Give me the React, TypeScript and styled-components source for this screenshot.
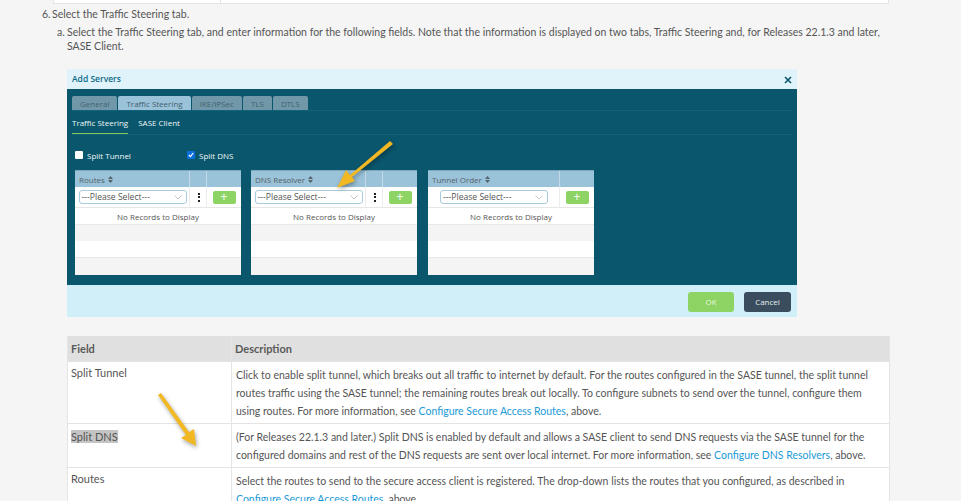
import React from "react";
import styled, { createGlobalStyle } from "styled-components";

const Global = createGlobalStyle`
  html, body { margin: 0; padding: 0; background: #f5f5f5; }
  body { width: 961px; height: 501px; overflow: hidden; font-family: "Lato", "Liberation Sans", sans-serif; }
  * { box-sizing: border-box; }
`;

const Page = styled.div`
  position: relative;
  width: 961px;
  height: 501px;
  overflow: hidden;
  color: #555;
`;

const TopTable = styled.div`
  display: grid;
  grid-template-columns: 166px 1fr;
  margin: 0 72px 0 53px;
  height: 4px;
  gap: 1px;
  background: #e4e4e4;
  padding: 0 1px 1px;
`;
const TopCell = styled.div`background: #fff;`;

const Step = styled.div<{ $indent: number }>`
  display: flex;
  margin-left: ${(p) => p.$indent}px;
  margin-right: 72px;
  font-size: 10.5px;
  line-height: 14px;
`;
const StepMark = styled.span<{ $w: number }>`
  flex: none;
  width: ${(p) => p.$w}px;
`;
const StepOne = styled(Step)`margin-top: 3px;`;
const StepTwo = styled(Step)`margin-top: 4px;`;

const Dialog = styled.div`
  width: 730px;
  margin: 16px 0 0 67px;
  font-family: "Open Sans", "Liberation Sans", sans-serif;
`;
const TitleBar = styled.div`
  display: flex;
  justify-content: space-between;
  align-items: center;
  height: 20px;
  padding: 0 5px 2px;
  background: #e0f3fb;
  color: #0d6a84;
  font-size: 8.5px;
  font-weight: 600;
`;
const Close = styled.span`
  display: flex;
  color: #0a566c;
  margin-top: 4px;
`;
const Body = styled.div`
  height: 196px;
  background: #0a566c;
  padding: 7px 6px 0 5px;
`;
const TabRow = styled.div`
  display: flex;
  gap: 1px;
  height: 15px;
  border-bottom: 1px solid #13637a;
`;
const Tab = styled.div<{ $active?: boolean }>`
  height: 14px;
  padding: 0 8px;
  display: flex;
  align-items: center;
  font-size: 8px;
  color: #44606e;
  background: ${(p) => (p.$active ? "#9ac2d8" : "#7198a9")};
  border-radius: 2px 2px 0 0;
`;
const SubTabs = styled.div`
  display: flex;
  gap: 10px;
  height: 24px;
  border-bottom: 1px solid #13637a;
`;
const SubTab = styled.div<{ $active?: boolean }>`
  height: 23px;
  display: flex;
  align-items: center;
  font-size: 8px;
  color: #eef6f8;
  border-bottom: 1px solid ${(p) => (p.$active ? "#7fc95a" : "transparent")};
`;
const Checks = styled.div`
  display: flex;
  margin: 14px 0 0 3px;
  height: 12px;
  align-items: center;
`;
const CheckItem = styled.label`
  display: flex;
  align-items: center;
  gap: 4px;
  width: 112px;
  font-size: 8px;
  color: #eef6f8;
`;
const Box = styled.span<{ $on?: boolean }>`
  width: 8px;
  height: 8px;
  display: flex;
  align-items: center;
  justify-content: center;
  border-radius: 1px;
  background: ${(p) => (p.$on ? "#0a6fdc" : "#fff")};
`;
const Tables = styled.div`
  display: flex;
  gap: 10px;
  margin: 9px 0 0 3px;
`;
const Grid = styled.div<{ $shift: number }>`
  width: 166px;
  height: 105px;
  margin-left: ${(p) => p.$shift}px;
  background: #fff;
  border-top: 1px solid #7ea7bb;
  color: #555;
`;
const GridRow = styled.div<{ $cols: string }>`
  display: grid;
  grid-template-columns: ${(p) => p.$cols};
`;
const HeadCell = styled.div`
  height: 16px;
  padding-left: 4px;
  display: flex;
  align-items: center;
  gap: 3px;
  font-size: 8px;
  color: #55636b;
  background: #9ac2d8;
  border-right: 1px solid #c4dbe7;
  &:last-child { border-right: 0; }
`;
const ControlCell = styled.div`
  height: 21px;
  display: flex;
  align-items: center;
  justify-content: center;
  padding-left: 1px;
  border-right: 1px solid #ececec;
  border-bottom: 1px solid #e6e6e6;
  &:last-child { border-right: 0; padding-left: 0; }
`;
const Select = styled.div`
  width: 108px;
  height: 14px;
  display: flex;
  align-items: center;
  justify-content: space-between;
  padding: 0 4px 0 2px;
  border: 1px solid #a9cbdc;
  border-radius: 3px;
  font-size: 8.6px;
  color: #555;
`;
const Dots = styled.span`
  display: flex;
  flex-direction: column;
  gap: 1.5px;
`;
const Dot = styled.i`
  display: block;
  width: 2px;
  height: 2px;
  background: #222;
`;
const Plus = styled.div`
  width: 23px;
  height: 13px;
  display: flex;
  align-items: center;
  justify-content: center;
  background: #8ed465;
  color: #fff;
  border-radius: 2px;
  font-size: 12px;
  line-height: 1;
`;
const Empty = styled.div`
  height: 17px;
  display: flex;
  align-items: center;
  justify-content: center;
  font-size: 8px;
  border-bottom: 1px solid #e8e8e8;
`;
const Stripe = styled.div<{ $odd: boolean; $h: number }>`
  height: ${(p) => p.$h}px;
  background: ${(p) => (p.$odd ? "#f4f4f4" : "#fff")};
  border-bottom: ${(p) => (p.$odd ? "0" : "1px solid #e8e8e8")};
`;
const Footer = styled.div`
  height: 32px;
  background: #d0eff9;
  display: flex;
  justify-content: flex-end;
  align-items: flex-start;
  gap: 10px;
  padding: 7px 6px 0 0;
`;
const Btn = styled.div<{ $ok?: boolean }>`
  width: ${(p) => (p.$ok ? 46 : 47)}px;
  height: 20px;
  padding-bottom: 2px;
  display: flex;
  align-items: center;
  justify-content: center;
  border-radius: 3px;
  font-size: 8px;
  color: ${(p) => (p.$ok ? "#e4f6da" : "#e8edf0")};
  background: ${(p) => (p.$ok ? "#8ed465" : "#3a4d5e")};
`;

const Fields = styled.div`
  width: 823px;
  margin: 19px 0 0 67px;
  background: #e4e4e4;
  display: grid;
  grid-template-columns: 163px minmax(0, 1fr);
  gap: 1px;
  padding: 0 1px;
  font-size: 10.5px;
  line-height: 18px;
`;
const FH = styled.div`
  height: 25px;
  background: #e0e0e0;
  display: flex;
  align-items: center;
  padding-left: 3px;
  font-size: 11px;
  font-weight: 700;
  color: #5a5a5a;
`;
const FieldName = styled.div<{ $h: number; $top: number }>`
  background: #fff;
  height: ${(p) => p.$h}px;
  padding: ${(p) => p.$top}px 3px 0;
  font-size: 11px;
`;
const FieldDesc = styled.div<{ $h: number }>`
  background: #fff;
  height: ${(p) => p.$h}px;
  padding: 4px 4px 0;
  white-space: nowrap;
`;
const Mark = styled.span`background: #c4c4c4;`;
const DocLink = styled.a`color: #1a9ad6;`;

const Arrow = styled.svg<{ $x: number; $y: number }>`
  position: absolute;
  left: ${(p) => p.$x}px;
  top: ${(p) => p.$y}px;
  filter: drop-shadow(1px 2px 2px rgba(0,0,0,.35));
`;

const Caret = () => (
  <svg width="8" height="5" viewBox="0 0 8 5"><path d="M.5.5 4 4 7.5.5" fill="none" stroke="#bbb" strokeWidth=".8" /></svg>
);
const Sort = () => (
  <svg width="5" height="7" viewBox="0 0 5 7"><path d="M2.5 0 5 3H0zM0 4h5L2.5 7z" fill="#55636b" /></svg>
);

const TableBox = ({ title, dots, shift = 0 }: { title: string; dots: boolean; shift?: number }) => {
  const cols = dots ? "115px 17px 1fr" : "132px 1fr";
  return (
    <Grid $shift={shift}>
      <GridRow $cols={cols}>
        <HeadCell>{title} <Sort /></HeadCell>
        {dots && <HeadCell />}
        <HeadCell />
      </GridRow>
      <GridRow $cols={cols}>
        <ControlCell><Select>---Please Select---<Caret /></Select></ControlCell>
        {dots && <ControlCell><Dots><Dot /><Dot /><Dot /></Dots></ControlCell>}
        <ControlCell><Plus>+</Plus></ControlCell>
      </GridRow>
      <Empty>No Records to Display</Empty>
      <Stripe $odd $h={16} />
      <Stripe $odd={false} $h={17} />
      <Stripe $odd $h={17} />
    </Grid>
  );
};

export default function App() {
  return (
    <Page>
      <Global />
      <TopTable><TopCell /><TopCell /></TopTable>
      <StepOne $indent={42}>
        <StepMark $w={10}>6.</StepMark>
        <span>Select the Traffic Steering tab.</span>
      </StepOne>
      <StepTwo $indent={57}>
        <StepMark $w={10}>a.</StepMark>
        <span>Select the Traffic Steering tab, and enter information for the following fields. Note that the information is displayed on two tabs, Traffic Steering and, for Releases 22.1.3 and later, SASE Client.</span>
      </StepTwo>
      <Dialog>
        <TitleBar>
          Add Servers
          <Close>
            <svg width="8" height="8" viewBox="0 0 8 8"><path d="M1 1l6 6M7 1 1 7" stroke="currentColor" strokeWidth="1.6" /></svg>
          </Close>
        </TitleBar>
        <Body>
          <TabRow>
            <Tab>General</Tab>
            <Tab $active>Traffic Steering</Tab>
            <Tab>IKE/IPSec</Tab>
            <Tab>TLS</Tab>
            <Tab>DTLS</Tab>
          </TabRow>
          <SubTabs>
            <SubTab $active>Traffic Steering</SubTab>
            <SubTab>SASE Client</SubTab>
          </SubTabs>
          <Checks>
            <CheckItem><Box />Split Tunnel</CheckItem>
            <CheckItem>
              <Box $on>
                <svg width="6" height="6" viewBox="0 0 6 6"><path d="M.8 3 2.4 4.6 5.2 1" fill="none" stroke="#fff" strokeWidth="1.2" /></svg>
              </Box>
              Split DNS
            </CheckItem>
          </Checks>
          <Tables>
            <TableBox title="Routes" dots />
            <TableBox title="DNS Resolver" dots />
            <TableBox title="Tunnel Order" dots={false} shift={1} />
          </Tables>
        </Body>
        <Footer>
          <Btn $ok>OK</Btn>
          <Btn>Cancel</Btn>
        </Footer>
      </Dialog>
      <Fields>
        <FH>Field</FH>
        <FH>Description</FH>
        <FieldName $h={61} $top={2}>Split Tunnel</FieldName>
        <FieldDesc $h={61}>
          Click to enable split tunnel, which breaks out all traffic to internet by default. For the routes configured in the SASE tunnel, the split tunnel<br />
          routes traffic using the SASE tunnel; the remaining routes break out locally. To configure subnets to send over the tunnel, configure them<br />
          using routes. For more information, see <DocLink>Configure Secure Access Routes</DocLink>, above.
        </FieldDesc>
        <FieldName $h={43} $top={4}><Mark>Split DNS</Mark></FieldName>
        <FieldDesc $h={43}>
          (For Releases 22.1.3 and later.) Split DNS is enabled by default and allows a SASE client to send DNS requests via the SASE tunnel for the<br />
          configured domains and rest of the DNS requests are sent over local internet. For more information, see <DocLink>Configure DNS Resolvers</DocLink>, above.
        </FieldDesc>
        <FieldName $h={60} $top={2}>Routes</FieldName>
        <FieldDesc $h={60}>
          Select the routes to send to the secure access client is registered. The drop-down lists the routes that you configured, as described in<br />
          <DocLink>Configure Secure Access Routes</DocLink>, above.
        </FieldDesc>
      </Fields>
      <Arrow $x={330} $y={136} width="66" height="58" viewBox="0 0 66 58">
        <path d="M60 5 20 39l-4-5-9 18 18-7-3-4L63 8z" fill="#f2b824" />
      </Arrow>
      <Arrow $x={152} $y={388} width="50" height="64" viewBox="0 0 50 64">
        <path d="M6 7 34 47l-5 3 15 8-2-17-5 3L9 5z" fill="#f2b824" />
      </Arrow>
    </Page>
  );
}
